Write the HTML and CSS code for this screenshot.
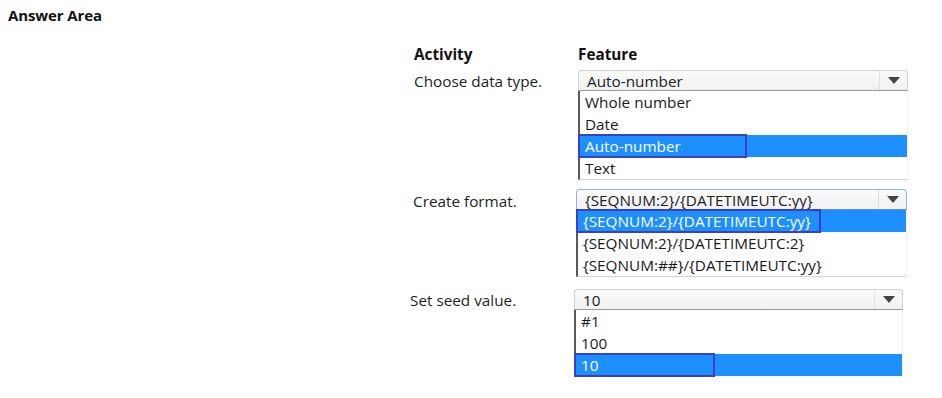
FILE: index.html
```html
<!DOCTYPE html>
<html>
<head>
<meta charset="utf-8">
<link rel="stylesheet" href="styles.css">
</head>
<body>
<h1 class="title">Answer Area</h1>
<div class="area">
  <div class="row head">
    <div class="label bold">Activity</div>
    <div class="label bold">Feature</div>
  </div>

  <div class="row r1">
    <div class="label">Choose data type.</div>
    <div class="dd">
      <div class="select"><span class="val">Auto-number</span><span class="btn"><i class="tri"></i></span></div>
      <ul class="list">
        <li>Whole number</li>
        <li>Date</li>
        <li class="sel"><span class="box">Auto-number</span></li>
        <li>Text</li>
      </ul>
    </div>
  </div>

  <div class="row r2">
    <div class="label">Create format.</div>
    <div class="dd">
      <div class="select focus"><span class="val">{SEQNUM:2}/{DATETIMEUTC:yy}</span><span class="btn"><i class="tri"></i></span></div>
      <ul class="list">
        <li class="sel"><span class="box">{SEQNUM:2}/{DATETIMEUTC:yy}</span></li>
        <li>{SEQNUM:2}/{DATETIMEUTC:2}</li>
        <li>{SEQNUM:##}/{DATETIMEUTC:yy}</li>
      </ul>
    </div>
  </div>

  <div class="row r3">
    <div class="label">Set seed value.</div>
    <div class="dd">
      <div class="select"><span class="val">10</span><span class="btn"><i class="tri"></i></span></div>
      <ul class="list">
        <li>#1</li>
        <li>100</li>
        <li class="sel"><span class="box">10</span></li>
      </ul>
    </div>
  </div>
</div>
</body>
</html>
```

FILE: styles.css
```css
* { box-sizing: border-box; }
html, body { margin: 0; padding: 0; background: #fff; }
body {
  font-family: "Open Sans", "Noto Sans", "Liberation Sans", sans-serif;
  color: #1a1a1a;
  width: 942px;
  height: 398px;
  overflow: hidden;
}
.title {
  margin: 0;
  padding: 5px 0 0 8px;
  font-size: 15px;
  font-weight: 700;
  line-height: 20px;
  letter-spacing: -0.1px;
  color: #111;
}
.area {
  padding: 18px 0 0 0;
  display: flex;
  flex-direction: column;
}
.row {
  display: grid;
  grid-template-columns: 164px 330px;
  padding-left: 414px;
}
.label {
  font-size: 15.3px;
  line-height: 22px;
  color: #1e1e1e;
}
.bold { font-weight: 700; color: #111; }
.head { height: 27px; }
.r1 .label { padding-top: 0px; }
.r2 { margin-top: 9px; padding-left: 413px; grid-template-columns: 163px 331px; }
.r2 .label { padding-top: 1px; }
.r3 { margin-top: 12px; padding-left: 410px; grid-template-columns: 164px 329px; }
.r3 .label { padding-top: 0px; }

.dd { display: flex; flex-direction: column; }
.select {
  height: 21px;
  border: 1px solid #cfcfcf;
  border-bottom: 1px solid #9a9a9a;
  border-radius: 4px 4px 0 0;
  background: linear-gradient(#fafafa, #f1f1f1);
  display: flex;
  overflow: hidden;
}
.select.focus { border-color: #8fb3e0; border-bottom-color: #5d8fd0; }
.val {
  flex: 1;
  height: 19px;
  padding: 0 0 0 8px;
  font-size: 15.3px;
  line-height: 20px;
  white-space: nowrap;
  color: #222;
  overflow: hidden;
}
.btn {
  width: 28px;
  border-left: 1px solid #e0e0e0;
  display: flex;
  align-items: center;
  justify-content: center;
}
.tri {
  width: 0; height: 0;
  border-left: 6px solid transparent;
  border-right: 6px solid transparent;
  border-top: 7px solid #444;
  margin-top: -1px;
}
.list {
  list-style: none;
  margin: 0;
  padding: 0;
  border-left: 2px solid #5a5a5a;
  border-right: 1px solid #f0f0f0;
  border-bottom: 1px solid #d6d6d6;
}
.list li {
  height: 22px;
  font-size: 15.3px;
  line-height: 22px;
  padding-left: 5px;
  white-space: nowrap;
  color: #1a1a1a;
}
.list li.sel {
  background: #1e8fff;
  color: #fff;
  padding-left: 0;
  margin-left: -2px;
}
.box {
  display: inline-block;
  height: 24px;
  margin-top: -1px;
  line-height: 20px;
  border: 2px solid #3b3fc0;
  padding: 0 10px 0 5px;
  color: #fff;
  overflow: hidden;
}
.r1 .box { width: 169px; }
.r2 .box { width: 245px; }
.r3 .box { width: 141px; }
.r3 .list { border-bottom: none; }
```
